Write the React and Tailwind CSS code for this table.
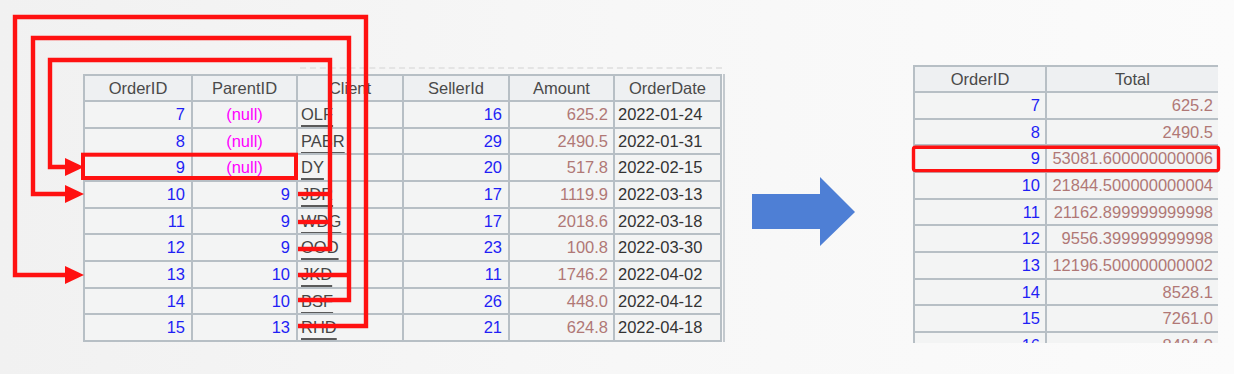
import React from "react";

const orders = [
    { id: 7, parent: null, client: "OLF", seller: 16, amount: "625.2", date: "2022-01-24" },
    { id: 8, parent: null, client: "PABR", seller: 29, amount: "2490.5", date: "2022-01-31" },
    { id: 9, parent: null, client: "DY", seller: 20, amount: "517.8", date: "2022-02-15" },
    { id: 10, parent: 9, client: "JDR", seller: 17, amount: "1119.9", date: "2022-03-13" },
    { id: 11, parent: 9, client: "WDG", seller: 17, amount: "2018.6", date: "2022-03-18" },
    { id: 12, parent: 9, client: "OOD", seller: 23, amount: "100.8", date: "2022-03-30" },
    { id: 13, parent: 10, client: "JKD", seller: 11, amount: "1746.2", date: "2022-04-02" },
    { id: 14, parent: 10, client: "BSF", seller: 26, amount: "448.0", date: "2022-04-12" },
    { id: 15, parent: 13, client: "RHD", seller: 21, amount: "624.8", date: "2022-04-18" },
];

const totals = [
    [7, "625.2"],
    [8, "2490.5"],
    [9, "53081.600000000006"],
    [10, "21844.500000000004"],
    [11, "21162.899999999998"],
    [12, "9556.399999999998"],
    [13, "12196.500000000002"],
    [14, "8528.1"],
    [15, "7261.0"],
    [16, "8484.0"],
];

const headCell = "flex items-center justify-center bg-[#eef0f2] text-[#4a4a4a]";
const cell = "flex items-center bg-[#f3f4f4] whitespace-nowrap overflow-hidden";
const blue = `${cell} justify-end pr-[6px] text-[#1f1ff5]`;
const brown = `${cell} justify-end pr-[5px] text-[#b07876]`;

const LeftTable = () => (
    <div className="flex flex-col ml-[83px] mt-[67px]">
        {/* faint dashed edge above the grid */}
        <div className="ml-[217px] w-[422px] h-0 border-t-2 border-dashed border-[#e4e4e4]" />
        <div className="mt-[5px] pr-px border-r-2 border-[#c3c9ce]">
            <div className="grid grid-cols-[106px_103px_104px_104px_103px_105px] grid-rows-[24px_repeat(9,24.67px)] gap-[2px] border-2 border-[#b7bfc5] bg-[#b7bfc5]">
                {["OrderID", "ParentID", "Client", "SellerId", "Amount", "OrderDate"].map((h) => (
                    <div key={h} className={headCell}>{h}</div>
                ))}
                {orders.map((o) => (
                    <React.Fragment key={o.id}>
                        <div className={blue}>{o.id}</div>
                        {o.parent === null ? (
                            <div className={`${cell} justify-center text-[#ff00ff]`}>(null)</div>
                        ) : (
                            <div className={blue}>{o.parent}</div>
                        )}
                        <div className={`${cell} pl-[3px] text-[#454545]`}>
                            <span className="underline decoration-[#5a5a5a] decoration-[1.5px] underline-offset-[5px]">{o.client}</span>
                        </div>
                        <div className={blue}>{o.seller}</div>
                        <div className={brown}>{o.amount}</div>
                        <div className={`${cell} pl-[3px] text-[#333]`}>{o.date}</div>
                    </React.Fragment>
                ))}
            </div>
        </div>
    </div>
);

const RightTable = () => (
    <div className="ml-[27px] mt-[65px] w-[305px] h-[278px] overflow-hidden">
        <div className="grid grid-cols-[130px_171px] grid-rows-[24px] auto-rows-[24.67px] gap-[2px] border-l-2 border-t-2 border-[#b7bfc5] bg-[#b7bfc5]">
            <div className={headCell}>OrderID</div>
            <div className={headCell}>Total</div>
            {totals.map(([id, total]) => (
                <React.Fragment key={id}>
                    <div className={`${cell} justify-end pr-[5px] text-[#1f1ff5]`}>{id}</div>
                    <div className={brown}>{total}</div>
                </React.Fragment>
            ))}
        </div>
    </div>
);

export default function App() {
    return (
        <div className="relative w-[1234px] h-[374px] overflow-hidden flex items-start bg-linear-to-r from-[#f1f1f1] via-[#f7f7f7] to-[#fbfbfb] text-[16.5px] font-['Liberation_Sans',Arial,sans-serif]">
            <LeftTable />

            {/* blue arrow */}
            <svg className="ml-[27px] mt-[177px] shrink-0" width="103" height="70" viewBox="0 0 103 70">
                <polygon points="0,17 68,17 68,0 103,35 68,69 68,52 0,52" fill="#4e7fd5" />
            </svg>

            <div className="ml-[31px]">
                <RightTable />
            </div>

            {/* red link lines laid over the tables */}
            <svg className="absolute inset-0 pointer-events-none" width="1234" height="374" viewBox="0 0 1234 374">
                <g fill="none" stroke="#ff1111" strokeWidth="4.4" strokeLinejoin="miter">
                    <path d="M298 326 H366 V17 H15 V275 H68" />
                    <path d="M298 300 H349 V38 H33 V194 H68" />
                    <path d="M298 275 H349" />
                    <path d="M298 249 H330 V60 H50 V167 H68" />
                    <path d="M298 194 H330" />
                    <path d="M298 222 H330" />
                    <rect x="83" y="154.7" width="213" height="23.3" strokeWidth="4" />
                    <rect x="913.5" y="147.3" width="305" height="23.3" rx="2" strokeWidth="3.4" />
                </g>
                <g fill="#ff1111">
                    <polygon points="65,158 84,167 65,176" />
                    <polygon points="65,185 84,194 65,203" />
                    <polygon points="65,266 84,275 65,284" />
                </g>
            </svg>
        </div>
    );
}
